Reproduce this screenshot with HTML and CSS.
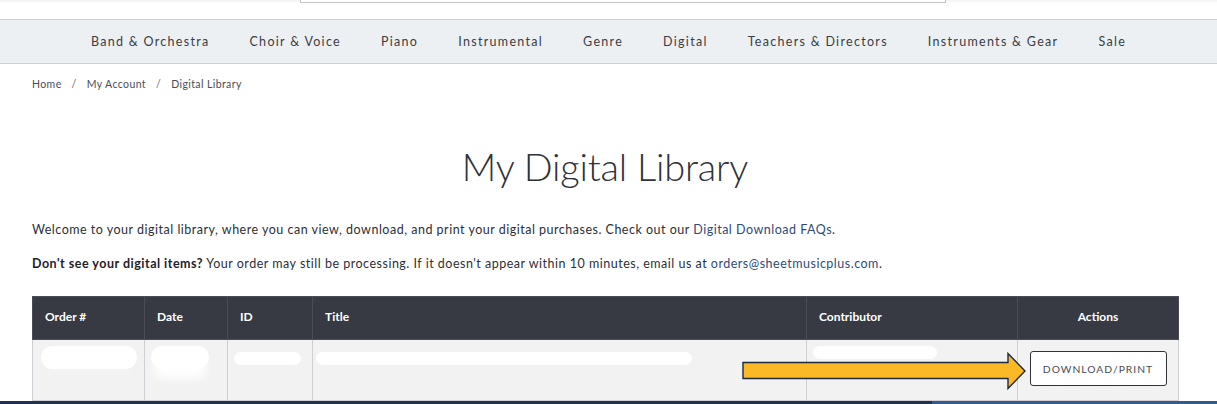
FILE: index.html
```html
<!DOCTYPE html>
<html lang="en">
<head>
<meta charset="utf-8">
<title>My Digital Library</title>
<link rel="stylesheet" href="styles.css">
</head>
<body>
<header class="topbar">
  <div class="topbar-left"></div>
  <div class="search"></div>
  <div class="topbar-right"></div>
</header>
<nav class="nav">
  <a>Band &amp; Orchestra</a>
  <a>Choir &amp; Voice</a>
  <a>Piano</a>
  <a>Instrumental</a>
  <a>Genre</a>
  <a>Digital</a>
  <a>Teachers &amp; Directors</a>
  <a>Instruments &amp; Gear</a>
  <a>Sale</a>
</nav>
<main class="page">
  <div class="crumbs"><span>Home</span><span class="sep">/</span><span>My Account</span><span class="sep">/</span><span>Digital Library</span></div>
  <h1 class="title">My Digital Library</h1>
  <p class="intro">Welcome to your digital library, where you can view, download, and print your digital purchases. Check out our <a class="link">Digital Download FAQs</a>.</p>
  <p class="intro"><b>Don't see your digital items?</b> Your order may still be processing. If it doesn't appear within 10 minutes, email us at <a class="link">orders@sheetmusicplus.com</a>.</p>
  <div class="table-wrap">
    <table class="lib">
      <colgroup>
        <col class="c1"><col class="c2"><col class="c3"><col class="c4"><col class="c5"><col class="c6">
      </colgroup>
      <thead>
        <tr><th>Order #</th><th>Date</th><th>ID</th><th>Title</th><th>Contributor</th><th class="center">Actions</th></tr>
      </thead>
      <tbody>
        <tr>
          <td><span class="pill p-order"></span></td>
          <td><span class="pill p-date"></span></td>
          <td><span class="pill p-id"></span></td>
          <td><span class="pill p-title"></span></td>
          <td><span class="pill p-contrib"></span></td>
          <td class="center"><button class="btn">DOWNLOAD/PRINT</button></td>
        </tr>
      </tbody>
    </table>
    <svg class="arrow" width="286" height="38" viewBox="0 0 286 38">
      <path d="M1 10.5 H266 V1.5 L283 19 L266 36.5 V26.5 H1 Z" fill="#fbb827" stroke="#1d2a3e" stroke-width="1.4" stroke-linejoin="miter"/>
    </svg>
  </div>
</main>
<div class="bottombar"><div class="bb-left"></div><div class="bb-right"></div></div>
</body>
</html>
```

FILE: styles.css
```css
html, body {
  margin: 0;
  padding: 0;
  background: #ffffff;
  font-family: Lato, "Open Sans", "Liberation Sans", sans-serif;
  color: #333;
  width: 1217px;
  height: 404px;
  overflow: hidden;
}

.topbar {
  height: 19px;
  display: flex;
  align-items: flex-start;
}
.topbar-left {
  width: 300px;
  height: 3px;
  background: linear-gradient(#f1f1f1, #fdfdfd);
}
.search {
  width: 644px;
  height: 2px;
  border: 1px solid #c4c4c8;
  border-top: none;
  background: #fff;
}
.topbar-right {
  flex: 1;
  height: 3px;
  background: linear-gradient(#f3f3f3, #fdfdfd);
}

.nav {
  height: 43px;
  background: #edf0f3;
  border-top: 1px solid #cfcfd4;
  border-bottom: 1px solid #cfcfd4;
  display: flex;
  justify-content: center;
  align-items: center;
  gap: 40px;
  font-size: 12.5px;
  letter-spacing: 1.3px;
  color: #3a3d44;
}
.nav a { display: block; }

.page {
  padding: 0 39px 0 32px;
}

.crumbs {
  padding-top: 14px;
  font-size: 10.5px;
  letter-spacing: 0.4px;
  color: #4a4d55;
  display: flex;
  height: 14px;
}
.crumbs .sep { margin: 0 10px; color: #666; }

.title {
  margin: 48px 0 0;
  text-align: center;
  font-size: 38px;
  font-weight: 300;
  color: #2f3238;
  line-height: 52px;
  letter-spacing: -0.2px;
}

.intro {
  margin: 0;
  font-size: 12.5px;
  letter-spacing: 0.5px;
  color: #2c2f36;
  line-height: 16px;
}
.title + .intro { margin-top: 30px; }
.intro + .intro { margin-top: 18px; }
.intro b { font-weight: 700; color: #1e2127; }
.link { color: #2e4b78; }

.table-wrap {
  position: relative;
  margin-top: 24px;
  width: 1146px;
}
.lib {
  width: 1146px;
  border-collapse: collapse;
  table-layout: fixed;
}
.c1 { width: 112px; }
.c2 { width: 83px; }
.c3 { width: 85px; }
.c4 { width: 494px; }
.c5 { width: 211px; }
.c6 { width: 161px; }

.lib th {
  background: #373a42;
  color: #ffffff;
  font-size: 12px;
  font-weight: 700;
  text-align: left;
  height: 43px;
  padding: 0 12px 3px;
  border: 1px solid #4a4d55;
  box-sizing: border-box;
}
.lib th.center, .lib td.center { text-align: center; }
.lib td {
  background: #f2f2f2;
  border: 1px solid #cfcfd3;
  height: 61px;
  vertical-align: top;
  padding: 6px 6px 0;
  box-sizing: border-box;
}
.pill {
  display: block;
  background: #ffffff;
  border-radius: 12px;
}
.p-order { width: 96px; height: 23px; margin-left: 2px; }
.p-date { width: 58px; height: 23px; box-shadow: 0 12px 10px -2px rgba(255,255,255,0.9); }
.p-id { width: 67px; height: 13px; margin-top: 6px; border-radius: 7px; }
.p-title { width: 376px; height: 13px; margin-top: 6px; margin-left: -3px; border-radius: 7px; }
.p-contrib { width: 124px; height: 13px; border-radius: 7px; }

.btn {
  margin-top: 5px;
  width: 137px;
  height: 35px;
  background: #ffffff;
  border: 1px solid #2f3238;
  border-radius: 3px;
  font-family: Lato, "Open Sans", "Liberation Sans", sans-serif;
  font-size: 10.3px;
  letter-spacing: 1px;
  color: #4a4d55;
  cursor: pointer;
}

.arrow {
  position: absolute;
  left: 710px;
  top: 56px;
}

.bottombar {
  position: fixed;
  left: 0;
  right: 0;
  bottom: 0;
  height: 3px;
  display: flex;
}
.bb-left { width: 932px; background: #1f3350; }
.bb-right { flex: 1; background: #335b8c; }
```
